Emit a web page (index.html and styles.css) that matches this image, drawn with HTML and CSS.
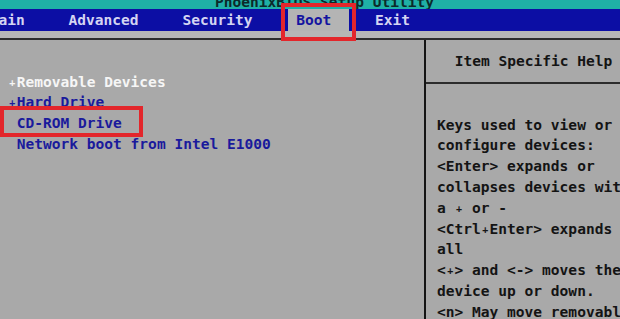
FILE: index.html
```html
<!DOCTYPE html>
<html lang="en">
<head>
    <meta charset="UTF-8">
    <meta name="viewport" content="width=device-width, initial-scale=1.0">
    <title>PhoenixBIOS Setup Utility - Boot</title>
    <link rel="stylesheet" href="styles.css">
</head>
<body>

<div class="screen">
    <div class="title-bar">
        <span class="title-text">PhoenixBIOS Setup Utility</span>
    </div>

    <nav class="menu-bar">
        <span class="menu-item">Main</span>
        <span class="menu-item">Advanced</span>
        <span class="menu-item">Security</span>
        <span class="menu-item active">Boot</span>
        <span class="menu-item">Exit</span>
    </nav>
    <div class="menu-gap"></div>

    <div class="content">
        <div class="boot-list">
            <div class="boot-row selected"><span class="sign">+</span>Removable Devices</div>
            <div class="boot-row"><span class="sign">+</span>Hard Drive</div>
            <div class="boot-row marked"><span class="sign"></span>CD-ROM Drive</div>
            <div class="boot-row"><span class="sign"></span>Network boot from Intel E1000</div>
        </div>

        <aside class="help">
            <div class="help-title">Item Specific Help</div>
            <div class="help-text">
                <p>Keys used to view or</p>
                <p>configure devices:</p>
                <p>&lt;Enter&gt; expands or</p>
                <p>collapses devices with</p>
                <p>a <span class="small-plus">+</span> or -</p>
                <p>&lt;Ctrl<span class="small-plus">+</span>Enter&gt; expands</p>
                <p>all</p>
                <p>&lt;<span class="small-plus">+</span>&gt; and &lt;-&gt; moves the</p>
                <p>device up or down.</p>
                <p>&lt;n&gt; May move removable</p>
            </div>
        </aside>
    </div>
</div>

</body>
</html>
```

FILE: styles.css
```css
body {
    margin: 0;
    overflow: hidden;
    background-color: #a9a9a9;
    font-family: "DejaVu Sans Mono", "Liberation Mono", monospace;
    font-size: 14.55px;
    font-weight: bold;
}
.screen {
    width: 641px;
    height: 319px;
    overflow: hidden;
}
.title-bar {
    height: 9px;
    overflow: hidden;
    background: #1fb0a6;
    text-align: center;
    padding-left: 8px;
}
.title-text {
    display: block;
    margin-top: -9px;
    line-height: 21px;
    color: #0c2a2a;
}
.menu-bar {
    display: flex;
    gap: 3ch;
    height: 22px;
    line-height: 22px;
    background: #0c0ea4;
    margin-left: -19px;
}
.menu-item {
    position: relative;
    padding: 0 1ch;
    color: #d4d4f2;
}
.menu-item.active {
    background: #b4b4b4;
    color: #1414a0;
    padding-right: 2ch;
    margin-right: -1ch;
}
/* red annotation frame */
.menu-item.active::after {
    content: "";
    position: absolute;
    top: -6px;
    bottom: -10px;
    left: -7px;
    right: -7px;
    border: 4px solid #e3262b;
}
.menu-gap {
    height: 7px;
    background: #b6b6b6;
}
.content {
    display: grid;
    grid-template-columns: 424px 2px 1fr;
    border-top: 2px solid #2c2c2c;
    height: 290px;
}
.boot-list {
    padding: 31.6px 0 0 8px;
    line-height: 20.8px;
    color: #1a1a9c;
}
.boot-row {
    position: relative;
    width: fit-content;
}
.boot-row.selected {
    color: #f6f6f6;
}
.sign,
.small-plus {
    display: inline-block;
    width: 8.76px;
    font-size: 10px;
    line-height: 10px;
    text-align: center;
    vertical-align: 1px;
}
.boot-row.marked::after {
    content: "";
    position: absolute;
    top: -7px;
    bottom: -3px;
    left: -8px;
    right: -21px;
    border: 4px solid #e3262b;
}
.help {
    grid-column: 3;
    border-left: 2px solid #141414;
    margin-left: -2px;
    color: #141414;
}
.help-title {
    height: 42px;
    line-height: 42px;
    text-align: center;
    border-bottom: 2px solid #2c2c2c;
}
.help-text {
    padding: 30.6px 0 0 11px;
    line-height: 20.8px;
    white-space: nowrap;
}
.help-text p {
    margin: 0;
}
```
